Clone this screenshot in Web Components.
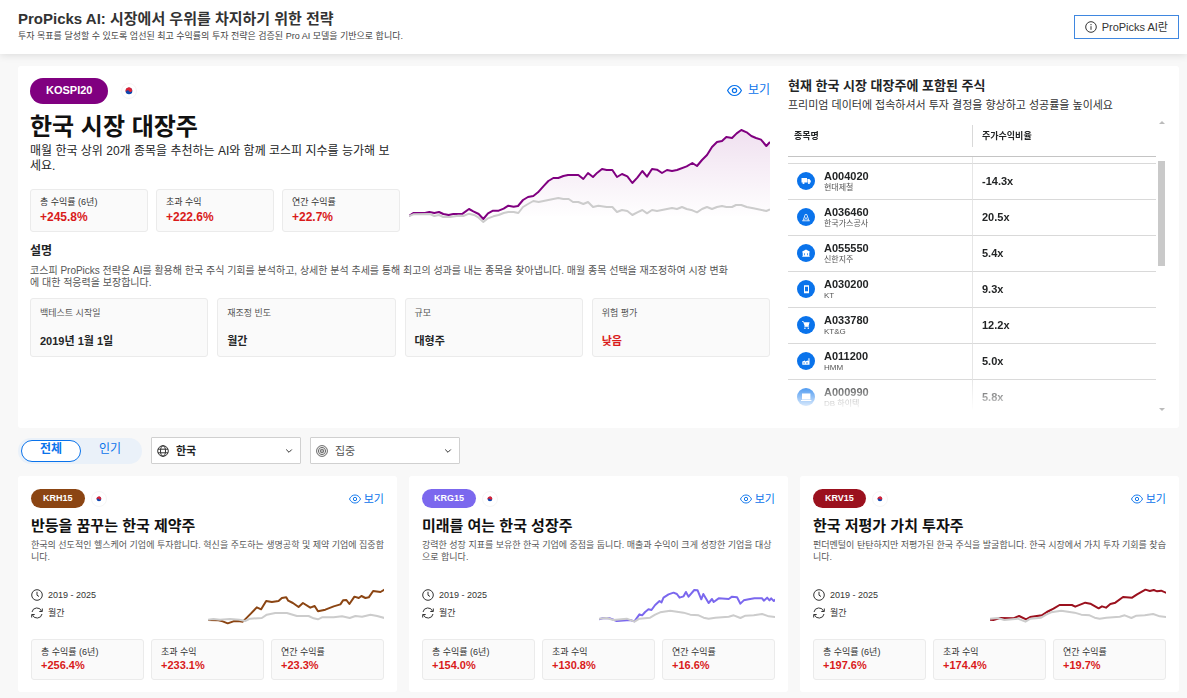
<!DOCTYPE html>
<html lang="ko">
<head>
<meta charset="utf-8">
<meta name="viewport" content="width=device-width, initial-scale=1">
<title>ProPicks AI</title>
<style>
  html { background: #f8f8f8; }
  body {
    margin: 0;
    color: #232526;
    font: 9px/12px "Liberation Sans", "Noto Sans CJK KR", sans-serif;
    --blue: #0a73eb;
    --red: #d91a1a;
    --muted: #555;
  }
  main { display: grid; gap: 12px; padding: 12px 8px 6px 18px; }
  .filters { margin: -3px 0 0; }
  .cards { display: grid; grid-template-columns: repeat(3, minmax(0, 1fr)); gap: 12px; }
</style>
</head>
<body>
<pp-header></pp-header>
<main>
  <pp-hero></pp-hero>
  <pp-filters class="filters"></pp-filters>
  <section class="cards">
    <pp-card code="KRH15" color="#8b4513" heading="반등을 꿈꾸는 한국 제약주" total="+256.4%" excess="+233.1%" annual="+23.3%" chart="krh">한국의 선도적인 헬스케어 기업에 투자합니다. 혁신을 주도하는 생명공학 및 제약 기업에 집중합니다.</pp-card>
    <pp-card code="KRG15" color="#7b68ee" heading="미래를 여는 한국 성장주" total="+154.0%" excess="+130.8%" annual="+16.6%" chart="krg">강력한 성장 지표를 보유한 한국 기업에 중점을 둡니다. 매출과 수익이 크게 성장한 기업을 대상으로 합니다.</pp-card>
    <pp-card code="KRV15" color="#9b111e" heading="한국 저평가 가치 투자주" total="+197.6%" excess="+174.4%" annual="+19.7%" chart="krv">펀더멘털이 탄탄하지만 저평가된 한국 주식을 발굴합니다. 한국 시장에서 가치 투자 기회를 찾습니다.</pp-card>
  </section>
</main>

<script>
const BASE = `:host,*{box-sizing:border-box}h1,h2,h3,p,dl,dd,dt{margin:0}button,select{font:inherit;color:inherit}`;

class PPElement extends HTMLElement {
  constructor() {
    super();
    this.attachShadow({ mode: "open" });
  }
  connectedCallback() {
    this.shadowRoot.innerHTML = `<style>${BASE}${this.css()}</style>${this.html()}`;
  }
  css() { return ""; }
  html() { return "<slot></slot>"; }
  attr(name) { return this.getAttribute(name) || ""; }
}

customElements.define("pp-header", class extends PPElement {
  css() {
    return `
      :host { display: block; position: relative; background: #fff; box-shadow: 0 1px 8px rgba(0,0,0,.12); }
      header { display: flex; justify-content: space-between; align-items: center; padding: 9px 8px 10px 18px; min-height: 54px; }
      h1 { font-size: 15px; line-height: 20px; font-weight: 700; color: #333; }
      p { color: #444; line-height: 15px; }
      button { display: flex; align-items: center; gap: 5px; height: 24px; padding: 0 10px; border: 1px solid #3f87e0; background: #fff; font-size: 11px; line-height: 14px; color: #333; }
      svg { width: 12px; height: 12px; flex: none; }
    `;
  }
  html() {
    return `<header>
      <div><h1>ProPicks AI: 시장에서 우위를 차지하기 위한 전략</h1>
      <p>투자 목표를 달성할 수 있도록 엄선된 최고 수익률의 투자 전략은 검증된 Pro AI 모델을 기반으로 합니다.</p></div>
      <button type="button"><svg viewBox="0 0 12 12" fill="none" stroke="#333"><circle cx="6" cy="6" r="5.3"/><path d="M6 5.2v3.6M6 3v1.2"/></svg>ProPicks AI란</button>
    </header>`;
  }
});

customElements.define("pp-badge", class extends PPElement {
  css() {
    return `
      :host { display: flex; align-items: center; gap: 6px; }
      :host([size="large"]) { gap: 13px; }
      .pill { padding: 3px 12px 4px; border-radius: 13px; background: ${this.attr("color")}; color: #fff; font-size: 9px; line-height: 12px; font-weight: 700; }
      :host([size="large"]) .pill { padding: 5px 16px 7px; font-size: 11px; line-height: 14px; }
      svg { width: 16px; height: 16px; border-radius: 50%; border: 1px solid #f6f6f6; }
      :host(:not([size="large"])) svg .mark { transform: scale(.7); transform-origin: 8px 8px; }
    `;
  }
  html() {
    return `<span class="pill"><slot></slot></span>
      <svg viewBox="0 0 16 16" role="img" aria-label="KR"><g class="mark"><circle cx="8" cy="8" r="3.8" fill="#0f47af"/><path d="M4.600 9.600A3.800 3.800 0 1 1 11.400 6.300A1.900 1.900 0 0 1 8 8A1.900 1.900 0 0 0 4.600 9.600Z" fill="#dd2033"/></g></svg>`;
  }
});

customElements.define("pp-view", class extends PPElement {
  css() {
    return `
      :host { display: block; font-size: 11px; line-height: 16px; }
      :host([size="large"]) { font-size: 12px; }
      a { display: flex; align-items: center; gap: 3px; color: var(--blue); text-decoration: none; }
      :host([size="large"]) a { gap: 6px; }
      svg { width: 12px; height: 12px; }
      :host([size="large"]) svg { width: 15px; height: 15px; }
    `;
  }
  html() {
    return `<a href="#"><svg viewBox="0 0 15 15" fill="none" stroke="currentColor" stroke-width="1.2"><path d="M.6 7.5C2.3 4.1 4.600 2.500 7.500 2.500S12.700 4.100 14.400 7.500C12.700 10.900 10.400 12.500 7.500 12.500S2.300 10.900 .6 7.500Z"/><circle cx="7.500" cy="7.500" r="2.100"/></svg>보기</a>`;
  }
});

customElements.define("pp-stats", class extends PPElement {
  css() {
    return `
      :host { display: block; }
      dl { display: grid; grid-template-columns: repeat(3, 1fr); gap: 7px; }
      div { padding: 5px 9px 7px; border: 1px solid #ebebeb; border-radius: 3px; background: #fafafa; white-space: nowrap; }
      dt { font-size: 9px; line-height: 14px; color: #333; }
      dd { font-size: 11px; line-height: 13px; font-weight: 700; color: var(--red); }
      :host([size="large"]) dl { gap: 8px; }
      :host([size="large"]) div { padding-bottom: 6px; }
      :host([size="large"]) dd { font-size: 12px; line-height: 16px; }
    `;
  }
  html() {
    const rows = [["총 수익률 (6년)", "total"], ["초과 수익", "excess"], ["연간 수익률", "annual"]];
    return `<dl>${rows.map(([t, k]) => `<div><dt>${t}</dt><dd>${this.attr(k)}</dd></div>`).join("")}</dl>`;
  }
});

const INDEX = "0,98 23,96 43,102 83,98 106,107 121,98 153,95 168,86 183,79 213,74 253,80 273,86 298,88 313,95 328,98 348,95 388,92 403,88 423,96 438,89 463,88 488,84 508,91 528,93";
const CHARTS = {
  kospi: {
    box: "27 165 1083 300", fill: true,
    line: "27,438 40,429 75,429 88,426 103,429 117,426 130,432 146,435 160,432 188,431 207,417 220,424 236,432 250,447 264,430 279,422 296,422 311,416 325,407 341,410 354,408 369,390 384,381 400,378 414,367 430,349 445,333 460,324 475,324 490,318 504,315 535,315 550,327 564,309 579,321 592,308 606,297 620,300 637,300 651,321 666,312 682,319 697,339 712,323 727,303 741,320 756,297 771,299 786,309 801,300 816,303 831,300 860,289 877,279 891,288 906,270 921,255 936,231 951,216 966,213 979,201 996,204 1010,190 1024,180 1040,187 1054,198 1068,204 1083,209 1099,228 1110,216",
    base: "27,438 40,433 90,432 103,438 117,435 130,441 150,441 175,437 190,438 207,431 225,436 236,443 250,456 264,445 280,439 296,435 311,429 325,426 341,426 355,429 369,411 384,402 400,393 416,396 445,390 475,384 490,387 506,387 519,396 535,396 550,402 564,396 579,411 595,407 620,411 637,411 651,426 666,420 682,423 697,435 712,427 727,420 741,430 756,420 771,423 801,417 816,414 831,417 846,411 860,417 877,421 891,427 906,417 921,411 936,417 951,411 966,408 979,411 996,411 1008,405 1024,405 1040,411 1060,415 1099,423 1110,418"
  },
  krh: {
    box: "0 0 528 120",
    line: "0,102 31,103 44,106 59,112 76,106 91,105 104,107 114,97 128,83 146,64 159,70 174,45 191,48 211,45 221,36 234,34 240,44 254,51 271,63 284,51 306,65 319,60 329,76 351,71 376,61 396,55 404,43 414,42 423,54 438,32 451,36 459,30 471,36 481,34 494,15 516,18 528,11",
    base: "0,101 16,99 36,101 66,99 94,101 111,105 126,98 161,96 176,86 201,81 236,81 266,90 301,90 316,97 329,100 341,94 376,94 401,91 424,96 441,90 461,92 486,86 506,90 528,96"
  },
  krg: {
    box: "0 0 528 120",
    line: "0,100 11,97 33,97 53,105 93,102 106,106 121,85 129,88 138,78 148,70 157,72 168,57 181,45 187,49 193,35 208,25 223,20 233,24 241,35 253,31 260,18 268,32 285,12 295,13 306,40 312,24 328,51 338,39 343,48 358,37 388,39 398,32 413,34 423,53 433,43 448,40 465,37 488,37 493,44 503,35 510,43 515,37 523,45 528,40",
    base: INDEX
  },
  krv: {
    box: "0 0 528 120",
    line: "0,101 10,102 30,96 70,97 87,90 108,100 120,93 140,90 155,88 170,78 190,68 208,57 245,57 255,62 285,50 300,53 325,67 335,61 347,65 360,54 375,50 398,33 425,35 440,25 465,11 478,15 490,12 500,16 512,14 528,21",
    base: INDEX
  }
};

customElements.define("pp-chart", class extends PPElement {
  css() {
    return `
      :host { display: block; }
      svg { display: block; width: 100%; height: 100%; }
      polyline { fill: none; stroke-width: 2; stroke-linejoin: round; vector-effect: non-scaling-stroke; }
    `;
  }
  html() {
    const c = CHARTS[this.attr("name")], color = this.attr("color");
    const area = c.fill ? `<defs><linearGradient id="fade" x1="0" y1="0" x2="0" y2="1"><stop offset="0" stop-color="${color}" stop-opacity=".12"/><stop offset="1" stop-color="${color}" stop-opacity="0"/></linearGradient></defs><polygon points="${c.line} 1110,438" fill="url(#fade)"/>` : "";
    return `<svg viewBox="${c.box}" preserveAspectRatio="none" aria-hidden="true">${area}<polyline points="${c.line}" stroke="${color}"/><polyline points="${c.base}" stroke="#ccc"/></svg>`;
  }
});

const ICONS = {
  truck: `<path d="M4.500 6h5.500v4.500H4.500zM10.400 7h2L13.800 8.700v1.800h-3.400z"/><circle cx="6.500" cy="11" r="1.100"/><circle cx="11.900" cy="11" r="1.100"/>`,
  rig: `<path d="M8.200 6.500h1.600l2.200 6.300M8.200 6.500 6 12.800M5.300 12.800h7.400" fill="none" stroke="#fff" stroke-width=".8"/><path d="M7.400 9l3.600 3.300M10.600 9 7 12.300" stroke="#fff" stroke-width=".7"/>`,
  bank: `<path fill-rule="evenodd" d="M9 5.400 12.700 7.600v.9H5.300v-.9zM5.700 8.500h6.600V12H5.700zM7.100 9.200v2h.7v-2zM10.200 9.200v2h.7v-2zM5.300 12h7.400v.8H5.300z"/>`,
  phone: `<path fill-rule="evenodd" d="M7 5.200h5v8H7zM8 6.800v4.400h3V6.800z"/>`,
  cart: `<path d="M5 5.200h1.500l.5 1.100h5.600l-1 3.600H7.600L6.200 6.100H5z"/><path d="M7.400 10.600h4.400" stroke="#fff" stroke-width=".9"/><circle cx="7.900" cy="12.200" r=".8"/><circle cx="11.300" cy="12.200" r=".8"/>`,
  factory: `<path fill-rule="evenodd" d="M5.300 12.800V9.500L8 8.500v.9l3-.9V9h.4V6.200h1.100v6.600zM6.500 10.500v1.100h1.200v-1.100zM9.200 10.500v1.100h1.500v-1.100z"/>`,
  laptop: `<path d="M5 5.400h8.400v6H5zM4 12h10.400v1H4z"/>`
};
const HOLDINGS = [
  ["truck", "A004020", "현대제철", "-14.3x"],
  ["rig", "A036460", "한국가스공사", "20.5x"],
  ["bank", "A055550", "신한지주", "5.4x"],
  ["phone", "A030200", "KT", "9.3x"],
  ["cart", "A033780", "KT&amp;G", "12.2x"],
  ["factory", "A011200", "HMM", "5.0x"],
  ["laptop", "A000990", "DB 하이텍", "5.8x"]
];

customElements.define("pp-holdings", class extends PPElement {
  css() {
    return `
      :host { display: block; }
      h2 { font-size: 13px; line-height: 16px; font-weight: 700; }
      p { margin-top: 1px; font-size: 11px; line-height: 20px; color: #333; }
      .pane { display: flex; gap: 2px; height: 294px; margin-top: 2px; }
      .rows { flex: 1; overflow: hidden; -webkit-mask-image: linear-gradient(#000 262px, transparent 294px); mask-image: linear-gradient(#000 262px, transparent 294px); }
      table { width: 100%; border-collapse: separate; border-spacing: 0; table-layout: fixed; }
      th, td { padding: 0; text-align: left; border-bottom: 1px solid #d9d9d9; }
      th { height: 40px; padding-bottom: 2px; border-color: #c4c4c4; }
      th span { display: block; line-height: 22px; padding-left: 6px; }
      th + th span { padding-left: 9px; border-left: 1px solid #d9d9d9; }
      td + td { border-left: 1px solid #e6e6e6; padding-left: 9px; font-weight: 700; font-size: 11px; }
      td { height: 36px; padding-bottom: 1px; }
      .peek td { height: 7px; }
      .stock { display: flex; align-items: center; gap: 9px; padding-left: 9px; }
      .stock svg { width: 18px; height: 18px; flex: none; border-radius: 50%; background: #0a73eb; fill: #fff; }
      strong { display: block; font-size: 11px; line-height: 13px; }
      small { display: block; font-size: 8px; line-height: 10px; color: #555; }
      .bar { display: flex; flex-direction: column; align-items: center; width: 7px; padding: 4px 0 0; }
      .up, .down { border: 3px solid transparent; height: 0; }
      .up { border-top-width: 0; border-bottom-color: #bbb; }
      .down { border-bottom-width: 0; border-top-color: #bbb; margin-top: auto; }
      .thumb { width: 7px; height: 105px; margin-top: 37px; background: #c9c9c9; }
    `;
  }
  html() {
    return `<h2>현재 한국 시장 대장주에 포함된 주식</h2>
      <p>프리미엄 데이터에 접속하셔서 투자 결정을 향상하고 성공률을 높이세요</p>
      <div class="pane"><div class="rows"><table>
        <thead><tr><th scope="col"><span>종목명</span></th><th scope="col"><span>주가수익비율</span></th></tr></thead>
        <tbody><tr class="peek"><td></td><td></td></tr>
        ${HOLDINGS.map(([i, code, name, pe]) => `<tr><td><div class="stock"><svg viewBox="0 0 18 18" aria-hidden="true">${ICONS[i]}</svg><div><strong>${code}</strong><small>${name}</small></div></div></td><td>${pe}</td></tr>`).join("")}
        </tbody></table></div>
        <div class="bar" aria-hidden="true"><i class="up"></i><i class="thumb"></i><i class="down"></i></div>
      </div>`;
  }
});

customElements.define("pp-hero", class extends PPElement {
  css() {
    return `
      :host { display: grid; grid-template-columns: minmax(0, 740fr) minmax(0, 377fr); gap: 18px; padding: 12px 14px 12px 12px; min-height: 362px; border-radius: 3px; background: #fff; }
      .top { display: flex; justify-content: space-between; align-items: flex-start; }
      .top pp-view { margin-top: 4px; }
      .lead { display: grid; grid-template-columns: minmax(0, 370fr) minmax(0, 361fr); gap: 9px; align-items: end; }
      h1 { margin-top: 6px; font-size: 24px; line-height: 34px; font-weight: 700; color: #111; }
      .intro { font-size: 12px; line-height: 15px; color: #232526; }
      pp-stats { margin-top: 15px; }
      pp-chart { height: 100px; margin-bottom: 7px; }
      h2 { margin-top: 11px; font-size: 12px; line-height: 16px; font-weight: 700; }
      .about { margin-top: 6px; font-size: 10px; line-height: 12px; color: var(--muted); }
      .facts { display: grid; grid-template-columns: repeat(4, 1fr); gap: 9px; margin-top: 9px; }
      .facts div { padding: 7px 9px; border: 1px solid #ebebeb; border-radius: 3px; background: #fafafa; }
      dt { line-height: 14px; color: var(--muted); }
      dd { margin-top: 13px; font-size: 11px; line-height: 16px; font-weight: 700; }
      .risk { color: var(--red); }
    `;
  }
  html() {
    return `<section>
        <div class="top"><pp-badge size="large" color="#800080">KOSPI20</pp-badge><pp-view size="large"></pp-view></div>
        <div class="lead">
          <div><h1>한국 시장 대장주</h1>
          <p class="intro">매월 한국 상위 20개 종목을 추천하는 AI와 함께 코스피 지수를 능가해 보세요.</p>
          <pp-stats size="large" total="+245.8%" excess="+222.6%" annual="+22.7%"></pp-stats></div>
          <pp-chart name="kospi" color="#800080"></pp-chart>
        </div>
        <h2>설명</h2>
        <p class="about">코스피 ProPicks 전략은 AI를 활용해 한국 주식 기회를 분석하고, 상세한 분석 추세를 통해 최고의 성과를 내는 종목을 찾아냅니다. 매월 종목 선택을 재조정하여 시장 변화<br>에 대한 적응력을 보장합니다.</p>
        <dl class="facts">
          <div><dt>백테스트 시작일</dt><dd>2019년 1월 1일</dd></div>
          <div><dt>재조정 빈도</dt><dd>월간</dd></div>
          <div><dt>규모</dt><dd>대형주</dd></div>
          <div><dt>위험 평가</dt><dd class="risk">낮음</dd></div>
        </dl>
      </section>
      <pp-holdings></pp-holdings>`;
  }
});

customElements.define("pp-select", class extends PPElement {
  css() {
    return `
      :host { display: grid; width: 150px; }
      select, svg { grid-row: 1; grid-column: 1; align-self: center; }
      select { appearance: none; width: 100%; height: 27px; padding: 0 24px; border: 1px solid #d0d0d0; border-radius: 1px; background: #fff; font-size: 11px; color: ${this.hasAttribute("strong") ? "#232526" : "#555"}; font-weight: ${this.hasAttribute("strong") ? 700 : 400}; }
      svg { pointer-events: none; z-index: 1; fill: none; stroke: #333; }
      .icon { width: 12px; height: 12px; margin-left: 6px; }
      .chev { width: 8px; height: 8px; margin-right: 8px; justify-self: end; }
    `;
  }
  html() {
    const icon = this.attr("icon") === "globe"
      ? `<circle cx="6" cy="6" r="5.300"/><ellipse cx="6" cy="6" rx="2.500" ry="5.300"/><path d="M1 4.200h10M1 7.800h10"/>`
      : `<g stroke="#555" stroke-width=".9"><circle cx="6" cy="6" r="5.400"/><circle cx="6" cy="6" r="3.600"/><circle cx="6" cy="6" r="1.800"/><circle cx="6" cy="6" r=".4"/></g>`;
    return `<select aria-label="${this.attr("label")}"><option>${this.attr("value")}</option></select>
      <svg class="icon" viewBox="0 0 12 12" aria-hidden="true">${icon}</svg>
      <svg class="chev" viewBox="0 0 8 8" aria-hidden="true"><path d="M1.200 2.500 4 5.300 6.800 2.500"/></svg>`;
  }
});

customElements.define("pp-filters", class extends PPElement {
  css() {
    return `
      :host { display: flex; align-items: center; gap: 9px; }
      .toggle { display: flex; padding: 2px 3px; border-radius: 13px; background: #eaf1f9; }
      button { width: 58px; height: 22px; padding: 0 0 3px; border: 1px solid transparent; border-radius: 11px; background: none; color: var(--blue); font-size: 12px; line-height: 16px; }
      button[aria-pressed="true"] { width: 60px; border-color: var(--blue); background: #fff; font-weight: 700; }
    `;
  }
  html() {
    return `<div class="toggle"><button type="button" aria-pressed="true">전체</button><button type="button" aria-pressed="false">인기</button></div>
      <pp-select icon="globe" label="국가" value="한국" strong></pp-select>
      <pp-select icon="target" label="집중" value="집중"></pp-select>`;
  }
});

customElements.define("pp-card", class extends PPElement {
  css() {
    return `
      :host { display: block; padding: 13px 13px 12px; border-radius: 3px; background: #fff; }
      .top, .mid { display: flex; justify-content: space-between; }
      .top { align-items: center; }
      h3 { margin-top: 7px; font-size: 15px; line-height: 22px; font-weight: 700; color: #111; }
      p { margin-top: 2px; min-height: 24px; color: var(--muted); }
      .mid { margin-top: 23px; }
      .meta div { display: flex; align-items: center; gap: 5px; line-height: 18px; color: #333; }
      .meta svg { width: 12px; height: 12px; fill: none; stroke: #333; }
      pp-chart { width: 50%; height: 40px; }
      pp-stats { margin-top: 13px; }
    `;
  }
  html() {
    const a = k => this.attr(k);
    return `<div class="top"><pp-badge color="${a("color")}">${a("code")}</pp-badge><pp-view></pp-view></div>
      <h3>${a("heading")}</h3>
      <p><slot></slot></p>
      <div class="mid">
        <div class="meta">
          <div><svg viewBox="0 0 12 12" aria-hidden="true"><circle cx="6" cy="6" r="5.300"/><path d="M6 2.800V6.200L8 7.500"/></svg>2019 - 2025</div>
          <div><svg viewBox="0 0 12 12" aria-hidden="true"><path d="M1 5A5 5 0 0 1 10.600 4.200M11 7A5 5 0 0 1 1.400 7.800M11.300 1.500V4.500H8.300M.7 10.500V7.500H3.700"/></svg>월간</div>
        </div>
        <pp-chart name="${a("chart")}" color="${a("color")}"></pp-chart>
      </div>
      <pp-stats total="${a("total")}" excess="${a("excess")}" annual="${a("annual")}"></pp-stats>`;
  }
});
</script>
</body>
</html>
